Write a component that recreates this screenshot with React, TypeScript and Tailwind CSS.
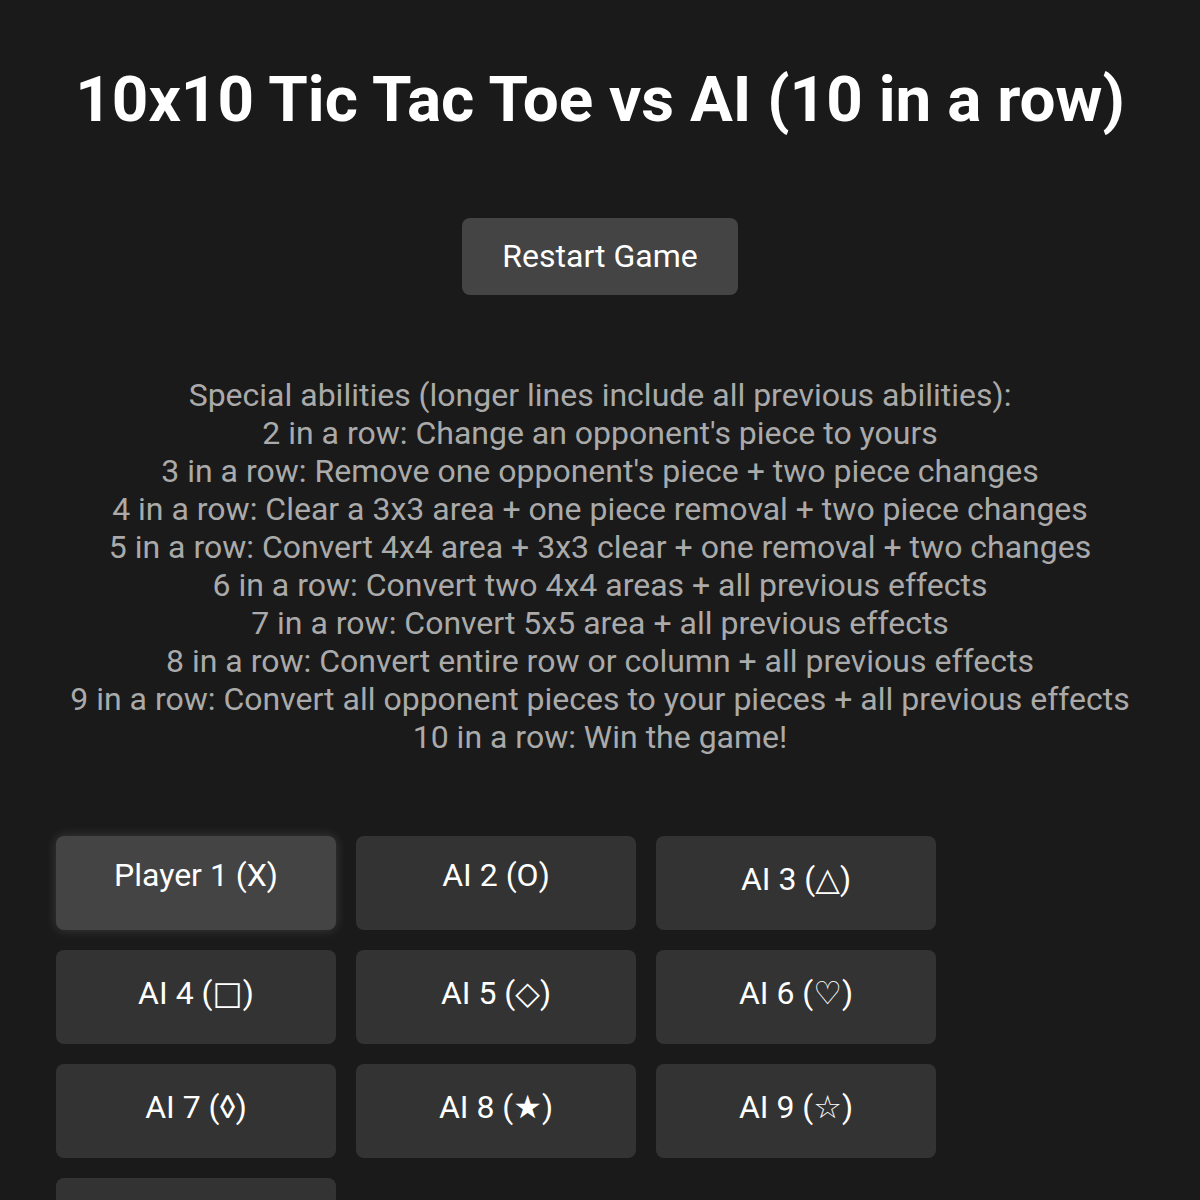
import React from "react";

const abilities = [
  "Special abilities (longer lines include all previous abilities):",
  "2 in a row: Change an opponent's piece to yours",
  "3 in a row: Remove one opponent's piece + two piece changes",
  "4 in a row: Clear a 3x3 area + one piece removal + two piece changes",
  "5 in a row: Convert 4x4 area + 3x3 clear + one removal + two changes",
  "6 in a row: Convert two 4x4 areas + all previous effects",
  "7 in a row: Convert 5x5 area + all previous effects",
  "8 in a row: Convert entire row or column + all previous effects",
  "9 in a row: Convert all opponent pieces to your pieces + all previous effects",
  "10 in a row: Win the game!",
];

const players = [
  "Player 1 (X)",
  "AI 2 (O)",
  "AI 3 (△)",
  "AI 4 (□)",
  "AI 5 (◇)",
  "AI 6 (♡)",
  "AI 7 (◊)",
  "AI 8 (★)",
  "AI 9 (☆)",
  "AI 10 (♢)",
];

export default function App() {
  return (
    <div
      className="min-h-[1200px] bg-[#1a1a1a] text-white"
      style={{ fontFamily: "Roboto, 'DejaVu Sans', sans-serif" }}
    >
      <div className="flex flex-col items-center pt-[62px]">
        <h1 className="text-[63.8px] font-bold leading-[75px] text-white">
          10x10 Tic Tac Toe vs AI (10 in a row)
        </h1>
        <button className="mt-[81px] h-[77px] w-[276px] rounded-[8px] bg-[#444444] text-[32px] leading-[37px] text-white">
          Restart Game
        </button>
        <div className="mt-[81px] text-center text-[32px] leading-[38px] text-[#aaaaaa]">
          {abilities.map((a) => (
            <div key={a}>{a}</div>
          ))}
        </div>
      </div>
      <div className="mt-[80px] grid grid-cols-[280px_280px_280px] gap-[20px] pl-[56px]">
        {players.map((p, i) => (
          <div
            key={p}
            className={
              i === 0
                ? "h-[94px] rounded-[8px] bg-[#444444] pt-[21px] text-center text-[32px] leading-[37px] text-white shadow-[0_0_12px_rgba(255,255,255,0.15)]"
                : i === 1
                ? "h-[94px] rounded-[8px] bg-[#333333] pt-[21px] text-center text-[32px] leading-[37px] text-white"
                : "h-[94px] rounded-[8px] bg-[#333333] pt-[25px] text-center text-[32px] leading-[37px] text-white"
            }
          >
            {p}
          </div>
        ))}
      </div>
    </div>
  );
}
